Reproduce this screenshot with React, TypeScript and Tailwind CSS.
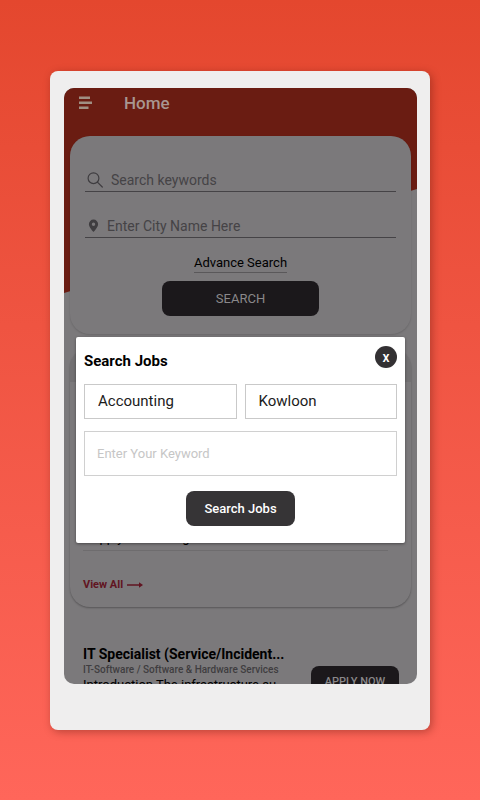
import React, { useState } from 'react';

interface FieldProps {
  id: string;
  label: string;
  icon: React.ReactNode;
}

const LineField: React.FC<FieldProps> = ({ id, label, icon }) => (
  <div className="flex h-[46px] items-center border-b border-[#454346] pt-[22px]">
    <label htmlFor={id} className="shrink-0">{icon}</label>
    <input
      id={id}
      type="text"
      aria-label={label}
      placeholder={label}
      className="min-w-0 flex-1 bg-transparent text-sm leading-5 text-black outline-none placeholder:text-[#454346]"
    />
  </div>
);

const SearchIcon = () => (
  <svg className="mr-2 ml-0.5 h-4 w-4" viewBox="0 0 16 16" fill="none" stroke="#3f3d40" strokeWidth="1.2" strokeLinecap="round">
    <circle cx="6.5" cy="6.2" r="5.4" />
    <path d="M10.400 10.100L15.300 15" />
  </svg>
);

const PinIcon = () => (
  <svg className="mr-1.5 ml-0.5 h-3.5 w-3.5" viewBox="0 0 14 14" fill="#3f3d40">
    <path fillRule="evenodd" d="M6.500 .6a4.600 4.600 0 0 0-4.600 4.600C1.900 8.400 6.500 13 6.500 13s4.600-4.600 4.600-7.800A4.600 4.600 0 0 0 6.500 .6zm0 2.900a1.700 1.700 0 1 1 0 3.400 1.700 1.700 0 0 1 0-3.400z" />
  </svg>
);

const SearchCard = () => (
  <section className="mx-1.5 rounded-[20px] bg-[#7b797b] px-[15px] pt-2.5 pb-[18px] shadow-[0_1px_2px_rgba(0,0,0,0.15)]">
    <LineField id="keywords" label="Search keywords" icon={<SearchIcon />} />
    <LineField id="city" label="Enter City Name Here" icon={<PinIcon />} />
    <div className="mt-4 flex flex-col items-center">
      <a href="#advance" className="border-b border-[#5a585a] text-[13px] leading-[18px] text-black">
        Advance Search
      </a>
      <button type="button" className="mt-2 h-[35px] w-[157px] rounded-lg bg-[#1b181b] text-[13px] text-[#8a888a]">
        SEARCH
      </button>
    </div>
  </section>
);

const CategoryCard = () => (
  <section className="mx-1.5 mt-[14px] flex h-[259px] flex-col justify-between overflow-hidden rounded-[20px] bg-[#7b797b] shadow-[0_1px_2px_rgba(0,0,0,0.3)]">
    <div className="h-[34px] bg-[#727072]" />
    <div className="px-[13px] pb-3">
      <p className="mr-2.5 border-b border-[#6e6c6e] px-2 pb-0.5 text-[13px] leading-5 text-black">Apply for training</p>
      <a href="#all" className="mt-6 flex items-center gap-1 text-[11px] leading-5 font-bold text-[#611421]">
        View All
        <svg className="h-2 w-4" viewBox="0 0 16 8" fill="none" stroke="currentColor" strokeWidth="1.5">
          <path d="M0 4H13" />
          <path d="M12 1.200L16 4L12 6.800Z" fill="currentColor" stroke="none" />
        </svg>
      </a>
    </div>
  </section>
);

const JobItem = () => (
  <article className="mt-9 flex items-start justify-between pr-[18px] pl-[19px]">
    <div className="w-[212px]">
      <h3 className="text-sm leading-[22px] font-bold whitespace-nowrap text-black">IT Specialist (Service/Incident...</h3>
      <p className="text-[10px] leading-[10px] font-medium whitespace-nowrap text-[#3f3d40]">IT-Software / Software &amp; Hardware Services</p>
      <p className="text-[13px] leading-5 whitespace-nowrap text-black">Introduction The infrastructure su...</p>
    </div>
    <button type="button" className="mt-[23px] h-8 w-[88px] rounded-lg bg-[#1b181b] text-[11px] leading-5 font-medium text-[#8a888a]">
      APPLY NOW
    </button>
  </article>
);

const SearchModal: React.FC<{ onClose: () => void }> = ({ onClose }) => {
  const [category, setCategory] = useState('Accounting');
  const [city, setCity] = useState('Kowloon');

  return (
    <div role="dialog" aria-label="Search Jobs" className="absolute inset-x-3 top-[249px] rounded-xs bg-white px-2 pt-2 pb-[17px] shadow-[0_1px_3px_rgba(0,0,0,0.4)]">
      <div className="flex h-[39px] items-start justify-between">
        <h2 className="pt-1 text-[15px] leading-6 font-bold text-black">Search Jobs</h2>
        <button type="button" aria-label="Close" onClick={onClose} className="mt-px h-[22px] w-[22px] rounded-full bg-[#333133] text-sm leading-[22px] font-medium text-white">
          x
        </button>
      </div>
      <div className="grid grid-cols-2 gap-2">
        <select aria-label="Category" value={category} onChange={(e) => setCategory(e.target.value)} className="h-[35px] appearance-none border border-[#c9c9c9] px-[13px] text-[15px] text-[#1c1c1c]">
          <option>Accounting</option>
        </select>
        <select aria-label="City" value={city} onChange={(e) => setCity(e.target.value)} className="h-[35px] appearance-none border border-[#c9c9c9] px-[13px] text-[15px] text-[#1c1c1c]">
          <option>Kowloon</option>
        </select>
      </div>
      <input
        type="text"
        aria-label="Keyword"
        placeholder="Enter Your Keyword"
        className="mt-3 h-[45px] w-full border border-[#d0d0d0] px-3 text-[13px] outline-none placeholder:text-[#c6c6c6]"
      />
      <div className="mt-[15px] flex justify-center">
        <button type="button" className="h-[35px] w-[109px] rounded-lg bg-[#363436] text-[13px] font-medium text-white">
          Search Jobs
        </button>
      </div>
    </div>
  );
};

const App = () => {
  const [open, setOpen] = useState(true);

  return (
    <main className="flex h-screen flex-col bg-linear-to-b from-[#e4472e] to-[#ff665a] px-[50px] pt-[71px] pb-[70px] font-[Roboto,sans-serif]">
      <div className="flex min-h-0 flex-1 flex-col rounded-lg bg-[#efeeee] pt-[17px] pr-[13px] pb-[46px] pl-3.5 shadow-[2px_2px_8px_rgba(90,20,10,0.4)]">
        <div className="relative isolate min-h-0 flex-1 overflow-hidden rounded-[10px] bg-[#7b797b]">
          {/* slanted red backdrop */}
          <svg className="absolute top-0 left-0 -z-10 h-[206px] w-full" viewBox="0 0 353 206" preserveAspectRatio="none" fill="#6a1c12">
            <path d="M0 0H353V101L0 205Z" />
          </svg>
          <header className="flex h-12 items-start pl-[15px]">
            <button type="button" aria-label="Menu" onClick={() => setOpen(true)} className="flex h-[30px] items-center">
              <svg className="h-3.5 w-3.5" viewBox="0 0 14 14" fill="#a08f83">
                <path d="M0 .5h11v2.600H0zM0 5.500h13v2.600H0zM0 10.500h9.500v2.600H0z" />
              </svg>
            </button>
            <h1 className="ml-[31px] text-[17px] leading-[30px] font-medium text-[#a89690]">Home</h1>
          </header>
          <SearchCard />
          <CategoryCard />
          <JobItem />
          {open && <SearchModal onClose={() => setOpen(false)} />}
        </div>
      </div>
    </main>
  );
};

export default App;
